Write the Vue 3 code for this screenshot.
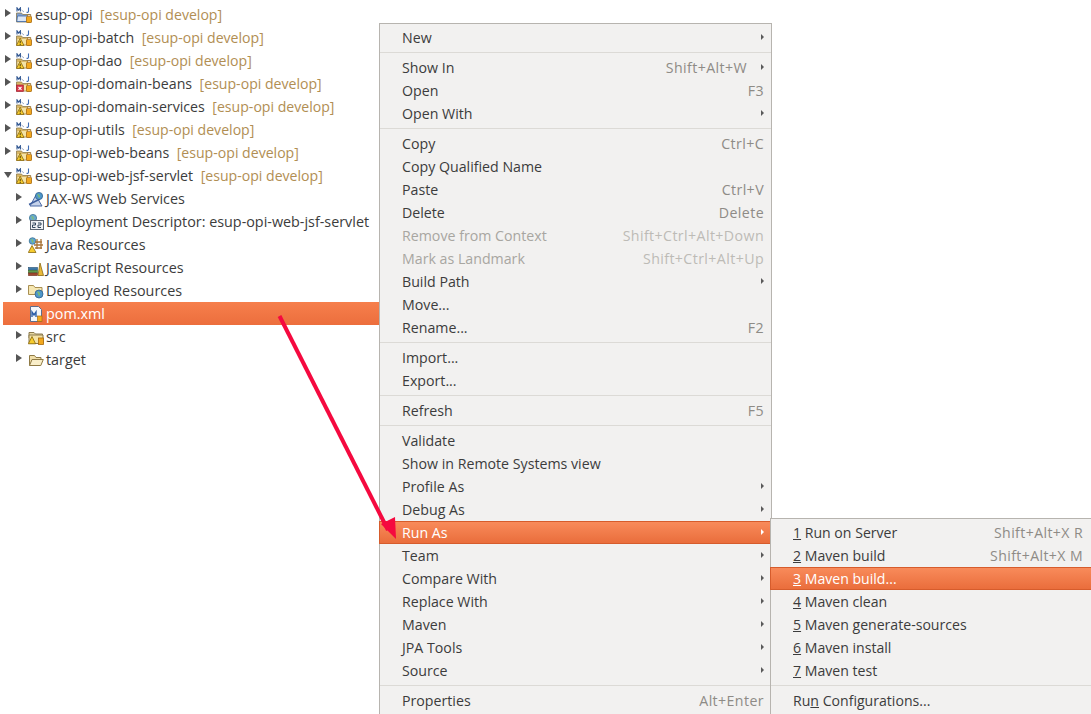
<script setup>
const tree = [
  { level: 0, arrow: 'right', icon: 'mvnplain', name: 'esup-opi', deco: '[esup-opi develop]' },
  { level: 0, arrow: 'right', icon: 'mvnwarn', name: 'esup-opi-batch', deco: '[esup-opi develop]' },
  { level: 0, arrow: 'right', icon: 'mvnwarn', name: 'esup-opi-dao', deco: '[esup-opi develop]' },
  { level: 0, arrow: 'right', icon: 'mvnerr', name: 'esup-opi-domain-beans', deco: '[esup-opi develop]' },
  { level: 0, arrow: 'right', icon: 'mvnwarn', name: 'esup-opi-domain-services', deco: '[esup-opi develop]' },
  { level: 0, arrow: 'right', icon: 'mvnwarn', name: 'esup-opi-utils', deco: '[esup-opi develop]' },
  { level: 0, arrow: 'right', icon: 'mvnwarn', name: 'esup-opi-web-beans', deco: '[esup-opi develop]' },
  { level: 0, arrow: 'down', icon: 'mvnwarn', name: 'esup-opi-web-jsf-servlet', deco: '[esup-opi develop]' },
  { level: 1, arrow: 'right', icon: 'jaxws', name: 'JAX-WS Web Services' },
  { level: 1, arrow: 'right', icon: 'dd', name: 'Deployment Descriptor: esup-opi-web-jsf-servlet' },
  { level: 1, arrow: 'right', icon: 'javares', name: 'Java Resources' },
  { level: 1, arrow: 'right', icon: 'jsres', name: 'JavaScript Resources' },
  { level: 1, arrow: 'right', icon: 'deployed', name: 'Deployed Resources' },
  { level: 1, arrow: '', icon: 'pom', name: 'pom.xml', selected: true },
  { level: 1, arrow: 'right', icon: 'src', name: 'src' },
  { level: 1, arrow: 'right', icon: 'folder', name: 'target' }
]

const mainMenu = [
  { label: 'New', sub: true }, { sep: true },
  { label: 'Show In', key: 'Shift+Alt+W', sub: true },
  { label: 'Open', key: 'F3' },
  { label: 'Open With', sub: true }, { sep: true },
  { label: 'Copy', key: 'Ctrl+C' },
  { label: 'Copy Qualified Name' },
  { label: 'Paste', key: 'Ctrl+V' },
  { label: 'Delete', key: 'Delete' },
  { label: 'Remove from Context', key: 'Shift+Ctrl+Alt+Down', off: true },
  { label: 'Mark as Landmark', key: 'Shift+Ctrl+Alt+Up', off: true },
  { label: 'Build Path', sub: true },
  { label: 'Move...' },
  { label: 'Rename...', key: 'F2' }, { sep: true },
  { label: 'Import...' },
  { label: 'Export...' }, { sep: true },
  { label: 'Refresh', key: 'F5' }, { sep: true },
  { label: 'Validate' },
  { label: 'Show in Remote Systems view' },
  { label: 'Profile As', sub: true },
  { label: 'Debug As', sub: true },
  { label: 'Run As', sub: true, active: true },
  { label: 'Team', sub: true },
  { label: 'Compare With', sub: true },
  { label: 'Replace With', sub: true },
  { label: 'Maven', sub: true },
  { label: 'JPA Tools', sub: true },
  { label: 'Source', sub: true }, { sep: true },
  { label: 'Properties', key: 'Alt+Enter' }
]

const subMenu = [
  { mn: '1', label: ' Run on Server', key: 'Shift+Alt+X R' },
  { mn: '2', label: ' Maven build', key: 'Shift+Alt+X M' },
  { mn: '3', label: ' Maven build...', active: true },
  { mn: '4', label: ' Maven clean' },
  { mn: '5', label: ' Maven generate-sources' },
  { mn: '6', label: ' Maven install' },
  { mn: '7', label: ' Maven test' },
  { sep: true },
  { pre: 'Ru', mn: 'n', label: ' Configurations...' }
]
</script>

<template>
  <div class="screen">
    <ul class="tree">
      <li v-for="row in tree" :key="row.name" class="row" :class="{ selected: row.selected, nested: row.level === 1 }">
        <span class="twist" :class="row.arrow"></span>
        <svg class="ticon" viewBox="0 0 16 16" width="16" height="16">
          <template v-if="row.icon.startsWith('mvn')">
            <path d="M1 4.500V.8l1.700 2.200L4.400.8v3.700" fill="none" stroke="#2f5590" stroke-width="1.100"/>
            <path d="M5.500 3 8 5" fill="none" stroke="#9fb0cc" stroke-width="1"/>
            <path d="M12.500.5v3.800q0 1.200-2 1" fill="none" stroke="#3f6db5" stroke-width="1.100"/>
            <path d="M.5 6h5l1.200 1.500h8V15H.5z" :fill="row.icon === 'mvnplain' ? '#7f9fd0' : '#d9b766'" stroke="#8b7a4e" stroke-width="0.800"/>
            <path d="M1.500 9h13v5.500H1.500z" fill="#f4e3a6" v-if="row.icon !== 'mvnplain'"/>
            <path d="M1.500 9h13L13 14.500H.8z" fill="#dbe6f5" stroke="#3f6aa8" stroke-width="0.800" v-else/>
            <path d="M4.200 8.200 8 15.500H.4z" fill="#f6cc2e" stroke="#8a6a10" stroke-width="0.800" v-if="row.icon === 'mvnwarn'"/>
            <rect x="3.700" y="10.800" width="1" height="2.500" fill="#4a3a10" v-if="row.icon === 'mvnwarn'"/>
            <rect x="3.700" y="14" width="1" height="1" fill="#4a3a10" v-if="row.icon === 'mvnwarn'"/>
            <rect x="0.500" y="9" width="7" height="6.500" fill="#d8374a" stroke="#9e1f2e" stroke-width="0.600" v-if="row.icon === 'mvnerr'"/>
            <path d="M2.500 10.800l3 3M5.500 10.800l-3 3" stroke="#fff" stroke-width="1.200" v-if="row.icon === 'mvnerr'"/>
            <rect x="10.500" y="9.500" width="5" height="6" rx=".6" fill="#f2a81e" stroke="#a86a0c" stroke-width="0.800"/>
            <rect x="11.500" y="8" width="3" height="1.600" fill="#fff" stroke="#a86a0c" stroke-width="0.600"/>
          </template>
          <template v-else-if="row.icon === 'jaxws'">
            <path d="M2 15 8 4l3 6 3 5z" fill="#c5d2ea" stroke="#4b6aa6" stroke-width="1"/>
            <path d="M1 13.500 12 8" stroke="#3e5e9e" stroke-width="1.400"/>
            <circle cx="11" cy="5" r="3.600" fill="#4f97c9" stroke="#2d5f8e" stroke-width=".8"/>
            <path d="M9.500 3.500c1.500.5 2 1.500 1.600 3" stroke="#7fc06a" stroke-width="1.300" fill="none"/>
          </template>
          <template v-else-if="row.icon === 'dd'">
            <circle cx="5" cy="4" r="3.600" fill="#69aacb" stroke="#3d7396" stroke-width=".8"/>
            <path d="M3.500 2.500c1.500.5 2 1.500 1.500 3" stroke="#86c06a" stroke-width="1.200" fill="none"/>
            <rect x="2.500" y="6.500" width="13" height="9" fill="#eef1f4" stroke="#5a6470" stroke-width="1"/>
            <path d="M4.500 9h3v2h-3v2.500h3M10 9h3v2h-3v2.500h3" fill="none" stroke="#30465c" stroke-width="1"/>
          </template>
          <template v-else-if="row.icon === 'javares'">
            <circle cx="4.500" cy="4" r="3.300" fill="#5fa5cf" stroke="#3d7396" stroke-width=".8"/>
            <path d="M3 2.500c1.500.5 2 1.500 1.500 3" stroke="#7fc06a" stroke-width="1.200" fill="none"/>
            <path d="M6 8h9M7 5h7M7 11h7M9 2v10M13 2v10" stroke="#a8763a" stroke-width="1.300" fill="none"/>
            <path d="M4 8.500 8 15.500H.3z" fill="#f6cc2e" stroke="#8a6a10" stroke-width="0.800"/>
          </template>
          <template v-else-if="row.icon === 'jsres'">
            <rect x="0.500" y="7.500" width="9" height="2.600" fill="#3f79a8" stroke="#274f70" stroke-width=".6"/>
            <rect x="0.500" y="10.300" width="9" height="2.600" fill="#5f9a4a" stroke="#3a6a2e" stroke-width=".6"/>
            <rect x="0.500" y="13" width="9" height="2.600" fill="#a0492f" stroke="#6e2e1c" stroke-width=".6"/>
            <path d="M12 3 15.500 15.500H10z" fill="#e9b93a" stroke="#8a6a10" stroke-width="0.800"/>
          </template>
          <template v-else-if="row.icon === 'deployed'">
            <path d="M.5 2.500h5L7 4.500h7v7H.5z" fill="#f6e7b2" stroke="#a88f52" stroke-width="1"/>
            <circle cx="11" cy="11" r="4" fill="#4f97c9" stroke="#2d5f8e" stroke-width=".8"/>
            <path d="M9.500 9c1.500.5 2 2 1.500 3.500" stroke="#7fc06a" stroke-width="1.500" fill="none"/>
          </template>
          <template v-else-if="row.icon === 'pom'">
            <path d="M2.500.5h8l3 3v12h-11z" fill="#f4f6fa" stroke="#5d6d8c" stroke-width="1"/>
            <path d="M4 11V6l2 3 2-3v5" fill="none" stroke="#2f5fa8" stroke-width="1.400"/>
            <rect x="9.500" y="10" width="4.500" height="5.500" fill="#f2a81e" stroke="#a86a0c" stroke-width=".7"/>
          </template>
          <template v-else-if="row.icon === 'src'">
            <path d="M1 3.500h5l1.500 1.500h7v4H1z" fill="#e6d7a2" stroke="#8b7a4e" stroke-width="1"/>
            <path d="M1 6h14v8.500H1z" fill="#f4e3a6" stroke="#8b7a4e" stroke-width="1"/>
            <path d="M4 7.500 7.600 14.800H.3z" fill="#f6cc2e" stroke="#8a6a10" stroke-width="0.800"/>
            <rect x="10.500" y="9" width="5" height="6.500" fill="#f2a81e" stroke="#a86a0c" stroke-width=".8"/>
          </template>
          <template v-else>
            <path d="M1.500 13.500V3.500h5L8 5.500h5v2" fill="#f1dfaa" stroke="#8f7a45" stroke-width="1"/>
            <path d="M1.500 13.500 4 7.500h11.300l-2.500 6z" fill="#f9eec9" stroke="#8f7a45" stroke-width="1"/>
          </template>
        </svg>
        <span class="tlabel">{{ row.name }}</span>
        <span v-if="row.deco" class="deco">{{ row.deco }}</span>
      </li>
    </ul>

    <div class="menu main">
      <template v-for="(item, i) in mainMenu" :key="i">
        <div v-if="item.sep" class="sep"></div>
        <div v-else class="item" :class="{ active: item.active, off: item.off }">
          <span class="label">{{ item.label }}</span>
          <span v-if="item.key" class="key" :class="{ spaced: item.sub }">{{ item.key }}</span>
          <span v-if="item.sub" class="caret"></span>
        </div>
      </template>
    </div>

    <div class="menu submenu">
      <template v-for="(item, i) in subMenu" :key="i">
        <div v-if="item.sep" class="sep"></div>
        <div v-else class="item" :class="{ active: item.active }">
          <span class="label">{{ item.pre }}<u>{{ item.mn }}</u>{{ item.label }}</span>
          <span v-if="item.key" class="key">{{ item.key }}</span>
        </div>
      </template>
    </div>

    <svg class="pointer" width="1091" height="714" viewBox="0 0 1091 714">
      <path d="M279.500 316 388 530" stroke="#f5093f" stroke-width="4" fill="none"/>
      <path d="M396 539 381 524 395 517z" fill="#f5093f"/>
    </svg>
  </div>
</template>

<style>
html, body { margin: 0; background: #fff; overflow: hidden; }
</style>

<style scoped>
.screen {
  position: relative;
  width: 1091px;
  height: 714px;
  overflow: hidden;
  background: #fff;
  font-family: "Open Sans", "Noto Sans", sans-serif;
  font-size: 14.2px;
  color: #3c3c3c;
}
.tree {
  list-style: none;
  margin: 0;
  padding: 3px 0 0 3px;
  width: 376px;
}
.row {
  display: flex;
  align-items: center;
  height: 23px;
  white-space: nowrap;
}
.twist {
  width: 13px;
  flex: none;
  position: relative;
  height: 23px;
}
.twist.right::before {
  content: "";
  position: absolute;
  left: 2px;
  top: 6px;
  border-left: 6px solid #555;
  border-top: 4px solid transparent;
  border-bottom: 4px solid transparent;
}
.twist.down::before {
  content: "";
  position: absolute;
  left: 1px;
  top: 8px;
  border-top: 6px solid #555;
  border-left: 4px solid transparent;
  border-right: 4px solid transparent;
}
.nested { padding-left: 11px; font-size: 14.35px; }
.nested .twist { width: 14px; }
.nested .ticon { margin-right: 2px; }
.ticon { flex: none; margin-right: 3px; }
.deco { margin-left: 7.500px; color: #b18e53; font-size: 14.1px; }
.selected {
  color: #fff;
  background: linear-gradient(#f67f4c, #ec6e3d);
}
.menu {
  position: absolute;
  box-sizing: border-box;
  background: #f2f1f0;
  border: 1px solid #b7b4af;
  padding: 2px 0;
}
.main { left: 379px; top: 23px; width: 393px; height: 700px; }
.submenu { left: 770px; top: 518px; width: 330px; height: 210px; font-size: 14.1px; }
.item {
  display: flex;
  align-items: center;
  height: 23px;
  padding: 0 7px 0 22px;
  white-space: pre;
  position: relative;
}
.label { flex: 1; }
.key { color: #8e8b86; letter-spacing: .4px; }
.key.spaced { margin-right: 17px; }
.off { color: #a8a6a1; }
.off .key { color: #bdbbb6; }
.caret {
  position: absolute;
  right: 7px;
  top: 8px;
  border-left: 3px solid #5a5a5a;
  border-top: 3px solid transparent;
  border-bottom: 3px solid transparent;
}
.sep { height: 1px; margin: 3px 0; background: #dcdad6; }
.active {
  color: #fff;
  margin: 0 -1px;
  background: linear-gradient(#f98c5c, #e96c3a);
  box-shadow: inset 0 0 0 1px #d65c2c;
}
.active .caret { border-left-color: #fff; right: 8px; }
.submenu .item { padding-right: 6px; padding-left: 22px; }
.submenu .item.active { padding-left: 23px; }
.main .item.active { padding-left: 23px; }
.submenu .key { margin-right: 10px; }
.pointer {
  position: absolute;
  left: 0;
  top: 0;
  pointer-events: none;
}
</style>
